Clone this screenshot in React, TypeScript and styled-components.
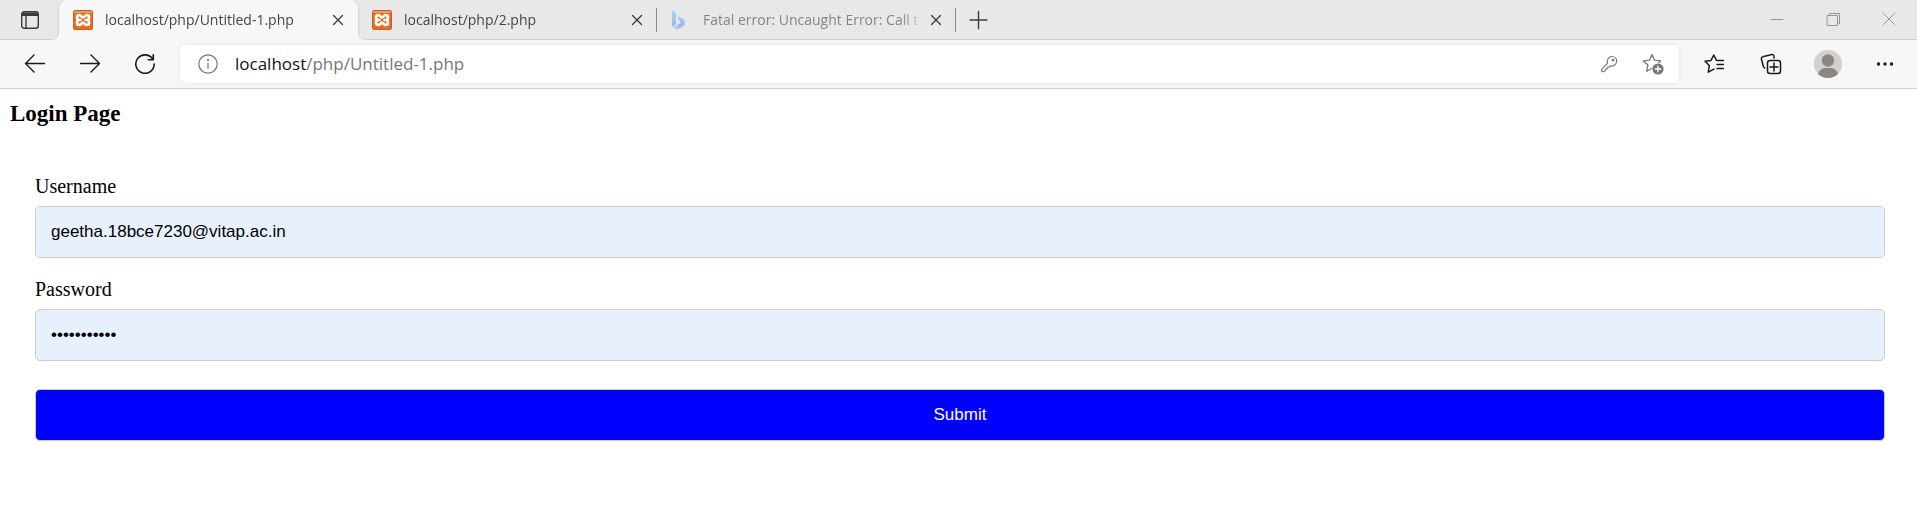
import React, { useState } from "react";
import styled, { createGlobalStyle, css } from "styled-components";

const GlobalStyle = createGlobalStyle`
  *, *::before, *::after { box-sizing: border-box; }
  body {
    margin: 0;
    background: #fff;
    color: #000;
    font-family: "Liberation Serif", "Times New Roman", serif;
  }
`;

const uiFont = `"Open Sans", "Noto Sans", sans-serif`;

const PlainButton = styled.button`
  display: flex;
  align-items: center;
  justify-content: center;
  flex: none;
  margin: 0;
  padding: 0;
  border: 0;
  background: transparent;
  color: inherit;
`;

/* ---------- Tab strip ---------- */

const TabStrip = styled.header`
  display: flex;
  height: 40px;
  background: #e8e8e8;
  box-shadow: inset 0 -1px #cfcfcf;
  font-family: ${uiFont};
`;

const TabActionsButton = styled(PlainButton)`
  width: 59px;
  color: #3b3b3b;
`;

const TabList = styled.div`
  display: flex;
  min-width: 0;
`;

const Tab = styled.div<{ $active?: boolean; $divided?: boolean }>`
  position: relative;
  display: flex;
  align-items: center;
  width: 299px;
  min-width: 0;
  padding: 0 9px 0 14px;

  ${({ $active }) =>
    $active &&
    css`
      background: #f7f7f7;
      border-radius: 8px 8px 0 0;
      box-shadow: 0 0 3px rgba(0, 0, 0, 0.18);
      clip-path: inset(0 -8px 0 -8px);

      &::before,
      &::after {
        content: "";
        position: absolute;
        bottom: 0;
        width: 6px;
        height: 6px;
      }
      &::before {
        right: 100%;
        background: radial-gradient(circle at 0 0, transparent 5px, #cfcfcf 5px, #f7f7f7 6px);
      }
      &::after {
        left: 100%;
        background: radial-gradient(circle at 100% 0, transparent 5px, #cfcfcf 5px, #f7f7f7 6px);
      }
    `}

  ${({ $divided }) =>
    $divided &&
    css`
      background: linear-gradient(#8a8a8a, #8a8a8a) right center / 1px 24px no-repeat;
    `}
`;

const TabButton = styled(PlainButton)<{ $faded?: boolean }>`
  flex: 1;
  justify-content: flex-start;
  gap: 12px;
  min-width: 0;
  height: 32px;
  overflow: hidden;
  font: 14px/20px ${uiFont};
  color: ${({ $faded }) => ($faded ? "#858585" : "#454545")};
  text-align: left;
`;

const TabTitle = styled.span`
  flex: 1;
  min-width: 0;
  overflow: hidden;
  white-space: nowrap;
  mask-image: linear-gradient(to right, #000 calc(100% - 24px), transparent);
`;

const CloseButton = styled(PlainButton)`
  width: 22px;
  height: 22px;
  color: #3b3b3b;
`;

const NewTabButton = styled(PlainButton)`
  width: 44px;
  color: #3b3b3b;
`;

const WindowControls = styled.div`
  display: flex;
  margin-left: auto;
  height: 37px;
  color: #969696;
`;

const WindowButton = styled(PlainButton)`
  width: 56px;
`;

/* ---------- Toolbar ---------- */

const Toolbar = styled.nav`
  display: flex;
  align-items: center;
  gap: 6px;
  height: 49px;
  padding: 0 4px 0 7px;
  background: #f7f7f7;
  border-bottom: 1px solid #cfcfcf;
  font-family: ${uiFont};
`;

const ToolGroup = styled.div`
  display: flex;
  flex: none;
`;

const ToolButton = styled(PlainButton)<{ $wide?: boolean }>`
  width: ${({ $wide }) => ($wide ? 57 : 55)}px;
  height: 40px;
  color: #1a1a1a;
`;

const AddressBar = styled.div`
  display: flex;
  align-items: center;
  flex: 1;
  min-width: 0;
  height: 38px;
  margin-left: 2px;
  padding: 0 4px 0 6px;
  border-radius: 5px;
  background: #fff;
  box-shadow: 0 0 4px rgba(0, 0, 0, 0.08);
  color: #767676;
`;

const AddressButton = styled(PlainButton)`
  width: 44px;
  height: 34px;
`;

const AddressText = styled.div`
  flex: 1;
  min-width: 0;
  margin-left: 5px;
  overflow: hidden;
  white-space: nowrap;
  outline: none;
  font-size: 17px;
  line-height: 24px;
`;

const Host = styled.span`
  color: #111;
`;

/* ---------- Page ---------- */

const Page = styled.main`
  padding: 11px 10px;
`;

const Heading = styled.h3`
  margin: 0;
  font-size: 23px;
  line-height: 27px;
`;

const LoginForm = styled.form`
  display: flex;
  flex-direction: column;
  gap: 20px;
  padding: 48px 22px 25px 25px;
`;

const Field = styled.div`
  display: flex;
  flex-direction: column;
  gap: 8px;
`;

const Label = styled.label`
  font-size: 20px;
  line-height: 23px;
`;

const controlStyle = css`
  width: 100%;
  height: 52px;
  padding: 0 15px;
  border: 1px solid #ccc;
  border-radius: 5px;
  font: 17px/20px "Liberation Sans", Arial, sans-serif;
`;

const TextInput = styled.input`
  ${controlStyle}
  background: #e8f0fe;
  color: #000;
`;

const SubmitButton = styled.button`
  ${controlStyle}
  margin-top: 8px;
  background: #00f;
  color: #fff;
`;

/* ---------- Icons ---------- */

type IconProps = { size: number; stroke?: number; children: React.ReactNode };

const Icon = ({ size, stroke = 1.4, children }: IconProps) => (
  <svg
    width={size}
    height={size}
    viewBox={`0 0 ${size} ${size}`}
    fill="none"
    stroke="currentColor"
    strokeWidth={stroke}
    strokeLinecap="round"
    strokeLinejoin="round"
    aria-hidden="true"
  >
    {children}
  </svg>
);

const CrossIcon = () => (
  <Icon size={12} stroke={1.3}>
    <path d="M1.5 1.5l9 9M10.5 1.5l-9 9" />
  </Icon>
);

const XamppIcon = () => (
  <Icon size={20}>
    <rect x=".5" y=".5" width="19" height="19" rx="1.5" fill="#ec6b1c" stroke="#b9622a" strokeWidth="1" />
    <path d="M1.5 2h17" stroke="#f6a878" strokeWidth="1.4" />
    <path
      d="M7.500 10H6C4.600 9.800 4 8.800 4 7.600C4 6.100 5 5.200 6.300 5.200C8.200 5.200 8.400 7.300 10 7.300S11.800 5.200 13.700 5.200C15 5.200 16 6.100 16 7.600C16 8.800 15.400 9.800 14.400 10C15.600 10.400 16 11.400 16 12.500C16 14 15 15 13.600 15C11.800 15 11.500 12.900 10 12.900S8.200 15 6.400 15C5 15 4 14 4 12.500C4 11.400 4.600 10.300 6 10M12.500 10H14.400"
      stroke="#fff"
      strokeWidth="2.700"
    />
  </Icon>
);

const BingIcon = () => (
  <Icon size={20}>
    <defs>
      <linearGradient id="bing-stem" x1="0" y1="0" x2="0" y2="1">
        <stop offset="0" stopColor="#9bdcf3" />
        <stop offset="1" stopColor="#a3aeeb" />
      </linearGradient>
      <linearGradient id="bing-bowl" x1="1" y1="0" x2="0" y2="1">
        <stop offset="0" stopColor="#9ad9f4" />
        <stop offset=".55" stopColor="#a0b4ee" />
        <stop offset="1" stopColor="#aee6f5" />
      </linearGradient>
    </defs>
    <path d="M1 .7L4.300 2Q5 2.400 5 3.600V14L2.500 17Q1 16.200 1 14.300Z" fill="url(#bing-stem)" stroke="none" />
    <path
      d="M6.800 6.300L11.800 8.800Q14.200 10.200 14.200 12.800Q14.200 14.800 12.300 16.100L8 18.900Q3.500 20.500 1.400 16.200Q3 17.400 5 16L9.600 13.300L8.300 10.900Z"
      fill="url(#bing-bowl)"
      stroke="none"
    />
  </Icon>
);

const STAR = "M10 1.500l2.500 5.700 6.100.7-4.500 4.200 1.200 6.100-5.300-3-5.300 3 1.200-6.100-4.500-4.200 6.100-.7z";

/* ---------- App ---------- */

const tabs = [
  { title: "localhost/php/Untitled-1.php", icon: <XamppIcon /> },
  { title: "localhost/php/2.php", icon: <XamppIcon /> },
  { title: "Fatal error: Uncaught Error: Call t", icon: <BingIcon />, faded: true },
];

export default function App() {
  const [username, setUsername] = useState("geetha.18bce7230@vitap.ac.in");
  const [password, setPassword] = useState("password123");

  return (
    <>
      <GlobalStyle />
      <TabStrip>
        <TabActionsButton aria-label="Tab actions menu">
          <Icon size={20}>
            <rect x="1.700" y="1.700" width="16.600" height="16.600" rx="2.500" />
            <path d="M2 2.500h16v3.500H2z" fill="currentColor" stroke="none" />
            <path d="M6 6v12" />
          </Icon>
        </TabActionsButton>
        <TabList>
          {tabs.map((tab, i) => (
            <Tab key={tab.title} $active={i === 0} $divided={i > 0}>
              <TabButton $faded={tab.faded}>
                {tab.icon}
                <TabTitle>{tab.title}</TabTitle>
              </TabButton>
              <CloseButton aria-label="Close tab">
                <CrossIcon />
              </CloseButton>
            </Tab>
          ))}
        </TabList>
        <NewTabButton aria-label="New tab">
          <Icon size={20}>
            <path d="M10.500 1.500v17M2 10h17" />
          </Icon>
        </NewTabButton>
        <WindowControls>
          <WindowButton aria-label="Minimize">
            <Icon size={14} stroke={1}>
              <path d="M1 7.500h12" />
            </Icon>
          </WindowButton>
          <WindowButton aria-label="Restore">
            <Icon size={14} stroke={1}>
              <path d="M1.500 3.500h10v10h-10zM3.500 3.500v-2h10v10h-2" />
            </Icon>
          </WindowButton>
          <WindowButton aria-label="Close window">
            <Icon size={14} stroke={1}>
              <path d="M1 1l12 12M13 1L1 13" />
            </Icon>
          </WindowButton>
        </WindowControls>
      </TabStrip>

      <Toolbar>
        <ToolGroup>
          <ToolButton aria-label="Back">
            <Icon size={22}>
              <path d="M20.500 10.500H1.500M10 2L1.500 10.500L10 19" />
            </Icon>
          </ToolButton>
          <ToolButton aria-label="Forward">
            <Icon size={22}>
              <path d="M1.500 10.500h19M12 2l8.500 8.500L12 19" />
            </Icon>
          </ToolButton>
          <ToolButton aria-label="Refresh">
            <Icon size={22} stroke={1.6}>
              <path d="M19 6.500A9.200 9.200 0 1 0 20.200 11M19.300 1.800V6.800H14.300" />
            </Icon>
          </ToolButton>
        </ToolGroup>

        <AddressBar>
          <AddressButton aria-label="View site information">
            <Icon size={20} stroke={1.200}>
              <circle cx="10" cy="10" r="9.200" />
              <path d="M10 9v5.500" />
              <circle cx="10" cy="6" r=".5" fill="currentColor" />
            </Icon>
          </AddressButton>
          <AddressText
            role="textbox"
            aria-label="Address"
            contentEditable
            suppressContentEditableWarning
            spellCheck={false}
          >
            <Host>localhost</Host>/php/Untitled-1.php
          </AddressText>
          <AddressButton aria-label="Saved passwords">
            <Icon size={18} stroke={1.200}>
              <path d="M7.300 8.600C6.600 5 8.600 1.500 12 1.500C14.800 1.500 16.700 3.500 16.700 6.100C16.700 9.400 13.600 11.600 10.200 11L8.700 12.200L7.400 12.400L7 14L5.500 14.400L5 16L3.500 16.700Q1.500 17 1.500 15.200Q1.400 14.400 2 13.900Z" />
              <circle cx="13" cy="5.200" r=".8" />
            </Icon>
          </AddressButton>
          <AddressButton aria-label="Add this page to favorites">
            <Icon size={22} stroke={1.300}>
              <path d={STAR} />
              <circle cx="16" cy="16" r="6.200" fill="#fff" stroke="none" />
              <circle cx="16" cy="16" r="5.600" fill="currentColor" stroke="none" />
              <path d="M16 13.200v5.600M13.200 16h5.600" stroke="#fff" strokeWidth="1.300" />
            </Icon>
          </AddressButton>
        </AddressBar>

        <ToolGroup>
          <ToolButton $wide aria-label="Favorites">
            <Icon size={20} stroke={1.500}>
              <path d="M13 6.400L12.300 6.200L9.800 1L7 6.400L1 7.200L5.300 11.600L4.300 18.200L10 15.200M13 6.500h6.500M13 10.500h6.500M13 14.500h6.500" />
            </Icon>
          </ToolButton>
          <ToolButton $wide aria-label="Collections">
            <Icon size={22} stroke={1.500}>
              <path d="M14 5V3.500A1.800 1.800 0 0 0 11.800 1.600L2.800 3.800A1.800 1.800 0 0 0 1.400 6L3.400 13.500A3 3 0 0 0 4.800 15" />
              <rect x="7.500" y="7.500" width="13" height="13" rx="2.500" />
              <path d="M14 10v8M10 14h8" />
            </Icon>
          </ToolButton>
          <ToolButton $wide aria-label="Profile">
            <Icon size={28}>
              <clipPath id="avatar">
                <circle cx="14" cy="14" r="14" />
              </clipPath>
              <g clipPath="url(#avatar)" stroke="none">
                <rect width="28" height="28" fill="#d3d1cd" />
                <circle cx="14" cy="10.500" r="6.200" fill="#8b8682" />
                <path d="M3.500 25Q6 18 11 18h6q5 0 7.500 7v3h-21z" fill="#8b8682" />
              </g>
            </Icon>
          </ToolButton>
          <ToolButton $wide aria-label="Settings and more">
            <Icon size={20}>
              <g fill="currentColor" stroke="none">
                <circle cx="3.500" cy="10" r="1.700" />
                <circle cx="10" cy="10" r="1.700" />
                <circle cx="16.500" cy="10" r="1.700" />
              </g>
            </Icon>
          </ToolButton>
        </ToolGroup>
      </Toolbar>

      <Page>
        <Heading>Login Page</Heading>
        <LoginForm onSubmit={(e) => e.preventDefault()}>
          <Field>
            <Label htmlFor="username">Username</Label>
            <TextInput
              id="username"
              type="text"
              value={username}
              onChange={(e) => setUsername(e.target.value)}
            />
          </Field>
          <Field>
            <Label htmlFor="password">Password</Label>
            <TextInput
              id="password"
              type="password"
              value={password}
              onChange={(e) => setPassword(e.target.value)}
            />
          </Field>
          <SubmitButton type="submit">Submit</SubmitButton>
        </LoginForm>
      </Page>
    </>
  );
}
